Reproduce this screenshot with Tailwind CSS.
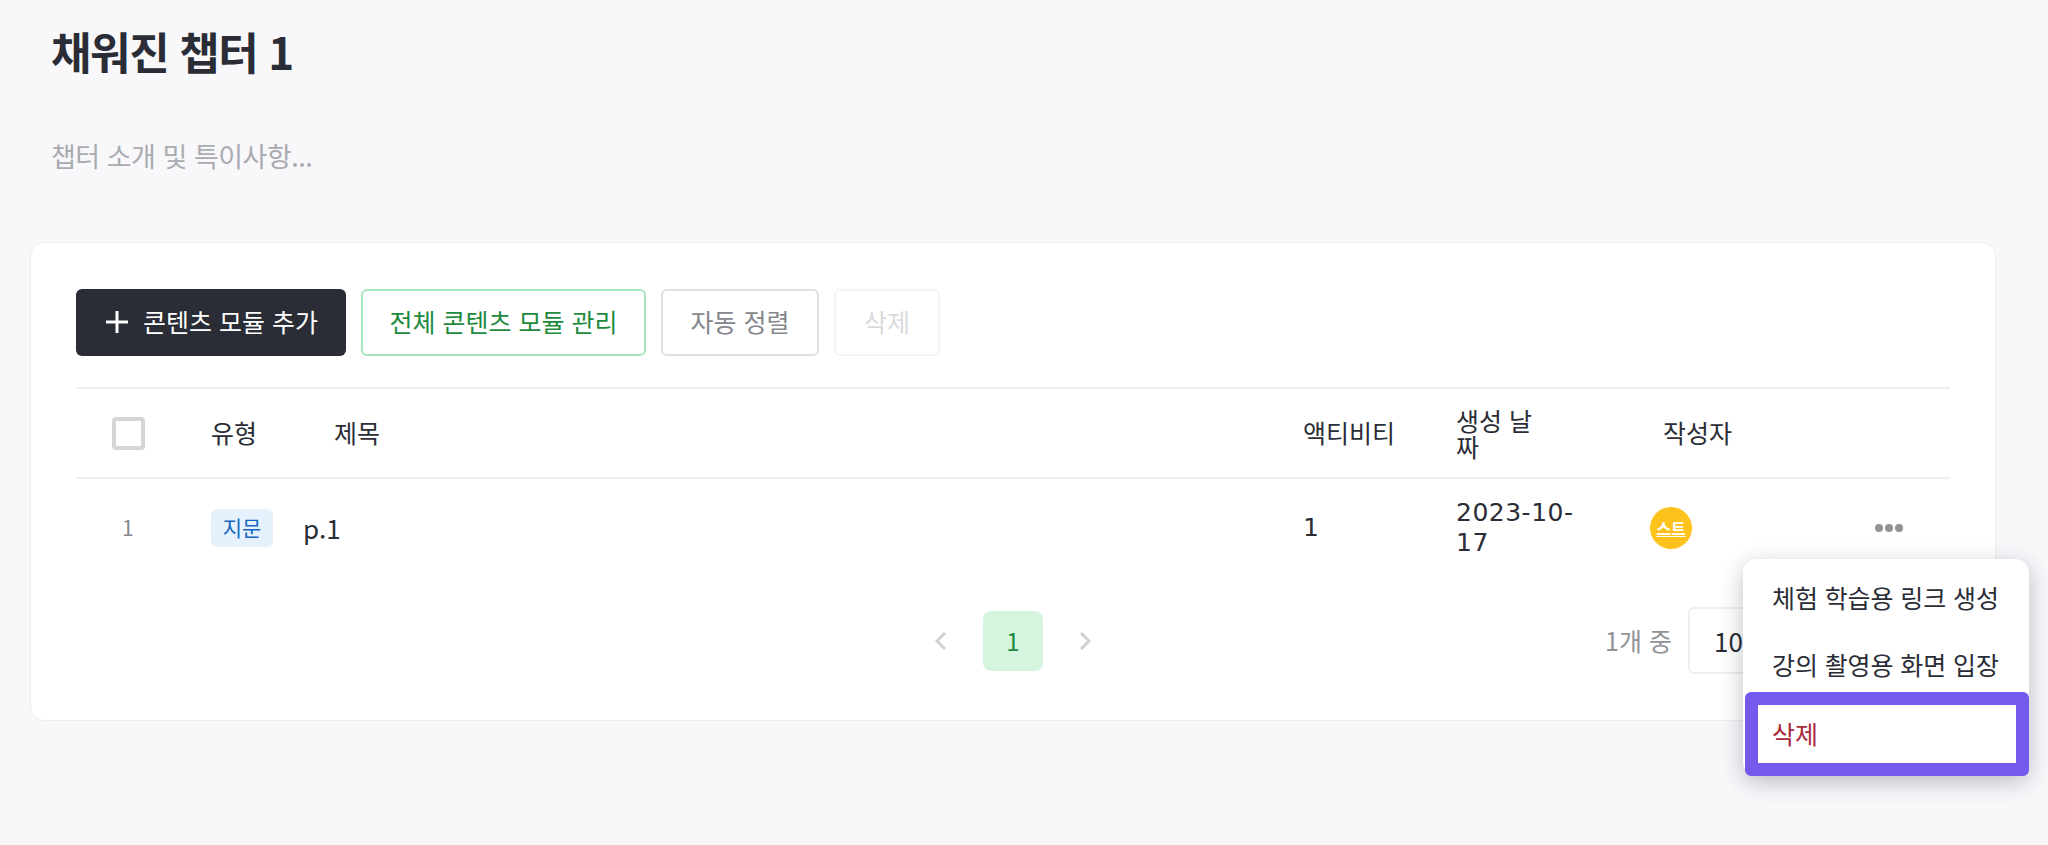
<!DOCTYPE html>
<html lang="ko">
<head>
    <meta charset="UTF-8">
    <meta name="viewport" content="width=device-width, initial-scale=1.0">
    <title>채워진 챕터 1</title>
    <script src="https://cdn.jsdelivr.net/npm/@tailwindcss/browser@4"></script>
</head>
<body class="relative h-[845px] overflow-hidden bg-[#f8f8fb] font-['Noto_Sans_CJK_KR','Noto_Sans',sans-serif] text-[#2b2d36]">

    <!-- Chapter header -->
    <div class="px-[51px] pt-[21px]">
        <h1 class="text-[44px] leading-[60px] font-bold tracking-[-1.4px]">채워진 챕터 1</h1>
        <p class="mt-[60px] text-[27px] leading-[30px] tracking-[-0.5px] text-[#a9abb0]">챕터 소개 및 특이사항...</p>
    </div>

    <!-- Content card -->
    <div class="ml-[30px] mr-[52px] mt-[71px] h-[479px] rounded-[14px] border border-[#eceef0] bg-white px-[45px] pt-[46px]">
        <div class="flex gap-[15px]">
            <button class="flex h-[67px] w-[270px] items-center justify-center gap-[13px] rounded-[6px] bg-[#2b2d36] pb-[2px] text-[25px] text-white">
                <svg class="h-[26px] w-[26px]" viewBox="0 0 26 26" fill="none" stroke="currentColor" stroke-width="3"><path d="M13 2v22M2 13h22"/></svg>
                <span>콘텐츠 모듈 추가</span>
            </button>
            <button class="h-[67px] w-[285px] rounded-[6px] border-2 border-[#a8e6bd] pb-[2px] text-[25px] text-[#1d8a3e]">전체 콘텐츠 모듈 관리</button>
            <button class="h-[67px] w-[158px] rounded-[6px] border-2 border-[#dfe0e2] pb-[2px] text-[25px] text-[#85878c]">자동 정렬</button>
            <button class="h-[67px] w-[106px] rounded-[6px] border-2 border-[#f3f4f5] pb-[2px] text-[25px] text-[#d9dadc]">삭제</button>
        </div>

        <!-- Table -->
        <table class="mt-[31px] w-[1874px] table-fixed border-t-2 border-[#eeeff1] text-[25px]">
            <colgroup>
                <col class="w-[135px]"><col class="w-[93px]"><col class="w-[999px]"><col class="w-[153px]"><col class="w-[207px]"><col class="w-[287px]">
            </colgroup>
            <thead>
                <tr class="h-[90px] border-b-2 border-[#eeeff1] text-left">
                    <th class="font-normal"><span class="ml-[36px] block h-[33px] w-[33px] rounded-[4px] border-[4px] border-[#d4d5d7]"></span></th>
                    <th class="font-normal">유형</th>
                    <th class="pl-[30px] font-normal">제목</th>
                    <th class="font-normal">액티비티</th>
                    <th class="pr-[120px] leading-[26px] font-normal">생성 날짜</th>
                    <th class="font-normal">작성자</th>
                </tr>
            </thead>
            <tbody>
                <tr class="h-[99px]">
                    <td class="pl-[46px] text-[21px] text-[#85878c]">1</td>
                    <td colspan="2">
                        <div class="flex items-center gap-[30px]">
                            <span class="flex h-[38px] w-[62px] items-center justify-center rounded-[6px] bg-[#e5f2fd] text-[21px] text-[#1565c0]">지문</span>
                            <span class="pb-[2px] text-[26px]">p.1</span>
                        </div>
                    </td>
                    <td class="font-['DejaVu_Sans',sans-serif] text-[25px]">1</td>
                    <td class="pr-[80px] font-['DejaVu_Sans',sans-serif] text-[25px] leading-[30px] tracking-[0.5px]">2023-10-17</td>
                    <td>
                        <div class="flex items-center justify-between pr-[47px]">
                            <span class="-ml-[13px] flex h-[42px] w-[42px] items-center justify-center rounded-full bg-[#fdc21c] text-[16px] font-bold text-white underline">스트</span>
                            <span class="flex gap-[2px]">
                                <i class="h-[8px] w-[8px] rounded-full bg-[#909296]"></i>
                                <i class="h-[8px] w-[8px] rounded-full bg-[#909296]"></i>
                                <i class="h-[8px] w-[8px] rounded-full bg-[#909296]"></i>
                            </span>
                        </div>
                    </td>
                </tr>
            </tbody>
        </table>

        <!-- Pagination -->
        <div class="relative mt-[34px] flex items-center justify-center">
            <div class="flex items-center gap-[36px]">
                <svg class="h-[20px] w-[12px] text-[#cfd0d3]" viewBox="0 0 12 20" fill="none" stroke="currentColor" stroke-width="3"><path d="M10 2 2 10l8 8"/></svg>
                <span class="flex h-[60px] w-[60px] items-center justify-center rounded-[8px] bg-[#d5f5df] text-[24px] text-[#1d8a3e]">1</span>
                <svg class="h-[20px] w-[12px] text-[#cfd0d3]" viewBox="0 0 12 20" fill="none" stroke="currentColor" stroke-width="3"><path d="m2 2 8 8-8 8"/></svg>
            </div>
            <div class="absolute right-0 top-[-4px] flex items-center gap-[16px]">
                <span class="text-[25px] text-[#909296]">1개 중</span>
                <span class="flex h-[67px] w-[262px] items-center rounded-[6px] border-2 border-[#eceef0] pl-[24px] text-[26px]">10</span>
            </div>
        </div>
    </div>

    <!-- Row action menu -->
    <div class="absolute left-[1743px] top-[559px] w-[286px] rounded-[14px] bg-white shadow-[0_6px_22px_rgba(30,32,50,0.28)]">
        <div class="flex h-[68px] items-center pl-[29px] pt-[10px] text-[25px] tracking-[-0.1px]">체험 학습용 링크 생성</div>
        <div class="flex h-[65px] items-center pl-[29px] pt-[10px] text-[25px] tracking-[-0.1px]">강의 촬영용 화면 입장</div>
        <div class="ml-[2px] flex h-[84px] items-center rounded-[6px] border-[13px] border-[#7558ec] pl-[14px] text-[25px] text-[#a8283c]">삭제</div>
    </div>

</body>
</html>
